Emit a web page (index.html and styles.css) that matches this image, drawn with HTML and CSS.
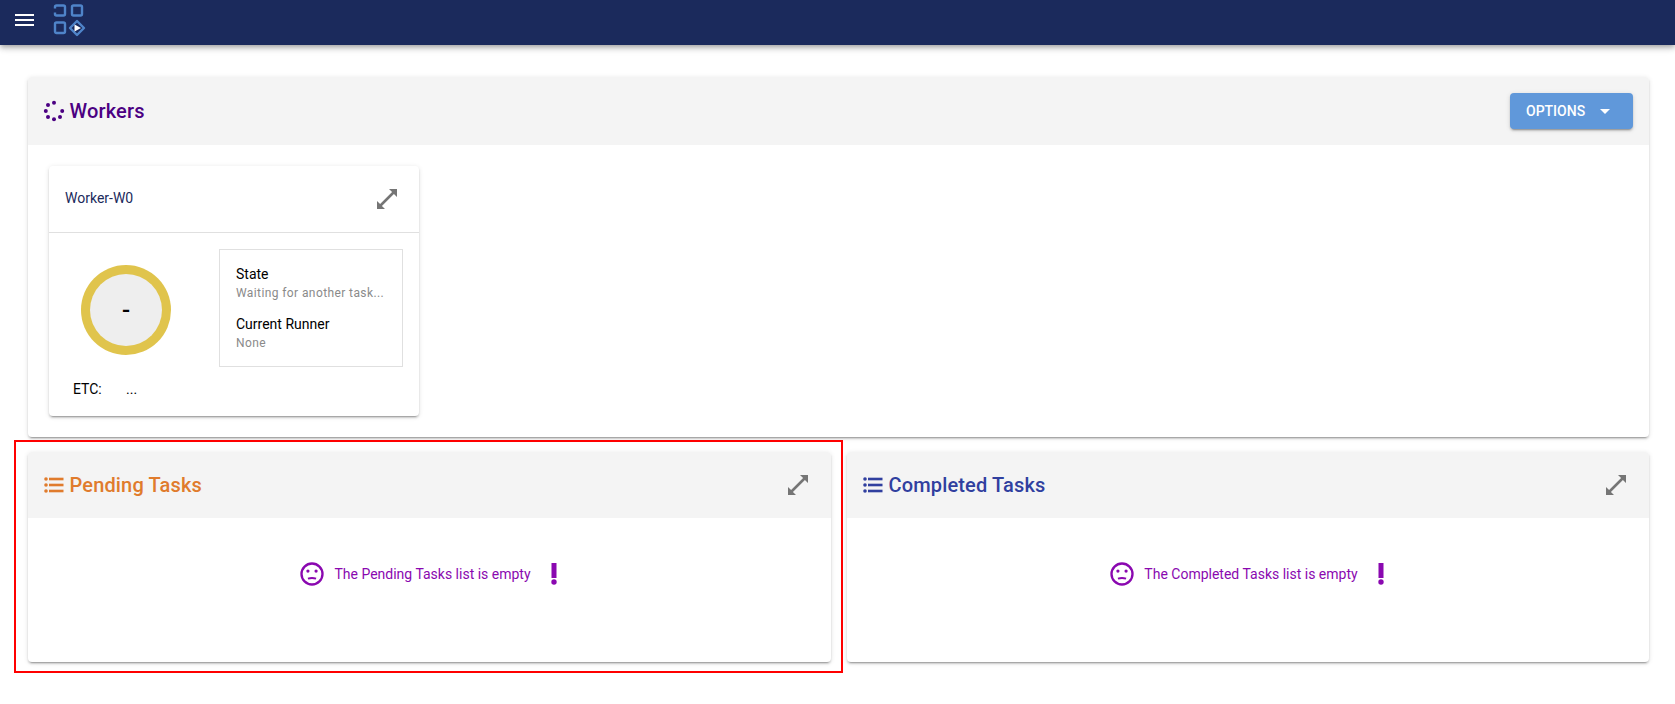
FILE: index.html
```html
<!DOCTYPE html>
<html lang="en">
<head>
<meta charset="utf-8">
<title>Workers</title>
<link rel="stylesheet" href="styles.css">
</head>
<body>
<header class="topbar">
  <button class="menu-btn" aria-label="Menu"><span></span><span></span><span></span></button>
  <svg class="logo" viewBox="0 0 34 34" fill="none" stroke="#4f84c9" stroke-width="2.400">
    <path d="M2 4.500V3Q2 1.500 3.500 1.500H10.500Q12 1.500 12 3V10Q12 11.500 10.500 11.500H3.500Q2 11.500 2 10V8.500"/>
    <rect x="19" y="1.500" width="10" height="10" rx="1.500"/>
    <rect x="2" y="18.500" width="10" height="10.500" rx="1.500"/>
    <path d="M24 17L31 24L24 31L17 24Z" stroke-linejoin="round"/>
    <path d="M21.500 20.500L28 24L21.500 27.500Z" fill="#fff" stroke="none"/>
  </svg>
</header>
<main class="page">
  <section class="panel">
    <div class="panel-head">
      <h2 class="title workers">
        <svg class="ico" viewBox="0 0 24 24" fill="#4b0082"><circle cx="12" cy="3.800" r="2"/><circle cx="20.200" cy="12" r="2"/><circle cx="18" cy="18" r="2"/><circle cx="12" cy="20.200" r="2"/><circle cx="6" cy="18" r="2"/><circle cx="3.800" cy="12" r="2"/><circle cx="6" cy="6" r="2"/></svg>
        Workers
      </h2>
      <button class="options">OPTIONS<svg class="caret" viewBox="0 0 10 5"><path d="M0 0H10L5 5Z" fill="#fff"/></svg></button>
    </div>
    <div class="panel-body">
      <article class="worker">
        <div class="worker-head">
          <span class="worker-name">Worker-W0</span>
          <svg class="expand" viewBox="0 0 24 24"><path d="M2 22V14L5.080 17.080L17.080 5.080L14 2H22V10L18.920 6.920L6.920 18.920L10 22Z"/></svg>
        </div>
        <div class="worker-body">
          <div class="worker-left">
            <div class="donut"><div class="donut-in">-</div></div>
            <div class="etc"><span class="etc-label">ETC:</span><span>...</span></div>
          </div>
          <div class="info">
            <div class="info-label">State</div>
            <div class="info-value">Waiting for another task...</div>
            <div class="info-label second">Current Runner</div>
            <div class="info-value">None</div>
          </div>
        </div>
      </article>
    </div>
  </section>
  <div class="columns">
    <section class="panel tasks highlighted">
      <div class="panel-head small">
        <h2 class="title pending">
          <svg class="ico" viewBox="0 0 24 24" fill="#e07b2c"><rect x="7" y="4.700" width="14.500" height="2.600"/><rect x="7" y="10.700" width="14.500" height="2.600"/><rect x="7" y="16.700" width="14.500" height="2.600"/><circle cx="4" cy="6" r="1.800"/><circle cx="4" cy="12" r="1.800"/><circle cx="4" cy="18" r="1.800"/></svg>
          Pending Tasks
        </h2>
        <svg class="expand" viewBox="0 0 24 24"><path d="M2 22V14L5.080 17.080L17.080 5.080L14 2H22V10L18.920 6.920L6.920 18.920L10 22Z"/></svg>
      </div>
      <div class="empty">
        <svg class="sad" viewBox="0 0 24 24" fill="none" stroke="#8a08b0" stroke-width="2"><circle cx="12" cy="12" r="9"/><circle cx="8.500" cy="9.500" r="1.400" fill="#8a08b0" stroke="none"/><circle cx="15.500" cy="9.500" r="1.400" fill="#8a08b0" stroke="none"/><path d="M8.500 16Q12 14.800 15.500 16" stroke-width="1.600"/></svg>
        <span class="empty-text">The Pending Tasks list is empty</span>
        <svg class="bang" viewBox="0 0 6 22" fill="#8a08b0"><rect x="0.500" y="0" width="5" height="15"/><circle cx="3" cy="19" r="2.700"/></svg>
      </div>
    </section>
    <section class="panel tasks">
      <div class="panel-head small">
        <h2 class="title completed">
          <svg class="ico" viewBox="0 0 24 24" fill="#303f9f"><rect x="7" y="4.700" width="14.500" height="2.600"/><rect x="7" y="10.700" width="14.500" height="2.600"/><rect x="7" y="16.700" width="14.500" height="2.600"/><circle cx="4" cy="6" r="1.800"/><circle cx="4" cy="12" r="1.800"/><circle cx="4" cy="18" r="1.800"/></svg>
          Completed Tasks
        </h2>
        <svg class="expand" viewBox="0 0 24 24"><path d="M2 22V14L5.080 17.080L17.080 5.080L14 2H22V10L18.920 6.920L6.920 18.920L10 22Z"/></svg>
      </div>
      <div class="empty">
        <svg class="sad" viewBox="0 0 24 24" fill="none" stroke="#8a08b0" stroke-width="2"><circle cx="12" cy="12" r="9"/><circle cx="8.500" cy="9.500" r="1.400" fill="#8a08b0" stroke="none"/><circle cx="15.500" cy="9.500" r="1.400" fill="#8a08b0" stroke="none"/><path d="M8.500 16Q12 14.800 15.500 16" stroke-width="1.600"/></svg>
        <span class="empty-text">The Completed Tasks list is empty</span>
        <svg class="bang" viewBox="0 0 6 22" fill="#8a08b0"><rect x="0.500" y="0" width="5" height="15"/><circle cx="3" cy="19" r="2.700"/></svg>
      </div>
    </section>
  </div>
</main>
</body>
</html>
```

FILE: styles.css
```css
* { box-sizing: border-box; }
html, body { margin: 0; padding: 0; height: 100%; overflow: hidden; background: #fff; }
body { font-family: Roboto, "Liberation Sans", sans-serif; color: #000; font-size: 14px; }

.topbar {
  height: 45px;
  background: #1b2a5c;
  display: flex;
  align-items: center;
  padding-left: 15px;
  box-shadow: 0 2px 4px -1px rgba(0,0,0,.2), 0 4px 5px 0 rgba(0,0,0,.14), 0 1px 10px 0 rgba(0,0,0,.12);
  position: relative;
}
.menu-btn {
  width: 19px;
  height: 12px;
  padding: 0;
  border: 0;
  background: none;
  display: flex;
  flex-direction: column;
  justify-content: space-between;
  margin-top: -5px;
}
.menu-btn span { display: block; height: 2px; background: #fff; }
.logo { width: 34px; height: 34px; margin-left: 19px; margin-top: -3px; }

.page { padding: 32px 26px 0 28px; }

.panel {
  background: #fff;
  border-radius: 4px;
  box-shadow: 0 3px 1px -2px rgba(0,0,0,.2), 0 2px 2px 0 rgba(0,0,0,.14), 0 1px 5px 0 rgba(0,0,0,.12);
}
.panel-head {
  height: 68px;
  background: #f4f4f4;
  border-radius: 4px 4px 0 0;
  display: flex;
  align-items: center;
  justify-content: space-between;
  padding: 0 16px 0 13.500px;
}
.panel-head.small { height: 66px; padding-right: 21px; }

.title {
  margin: 0;
  display: flex;
  align-items: center;
  gap: 4px;
  font-size: 20px;
  font-weight: 500;
  line-height: 24px;
  letter-spacing: .15px;
}
.ico { width: 24px; height: 24px; flex: none; }
.workers { color: #4b0082; }
.pending { color: #e07b2c; }
.completed { color: #303f9f; }

.options {
  width: 123px;
  height: 36px;
  border: 0;
  border-radius: 4px;
  background: #6098da;
  color: #fff;
  font: 500 14px Roboto, sans-serif;
  display: flex;
  align-items: center;
  padding: 0 0 0 16px;
  box-shadow: 0 3px 1px -2px rgba(0,0,0,.2), 0 2px 2px 0 rgba(0,0,0,.14), 0 1px 5px 0 rgba(0,0,0,.12);
}
.caret { width: 10px; height: 5px; margin-left: 15px; }

.panel-body { padding: 21px 20px 21px 21px; height: 292px; }
.worker {
  width: 370px;
  height: 250px;
  border-radius: 4px;
  background: #fff;
  box-shadow: 0 3px 1px -2px rgba(0,0,0,.2), 0 2px 2px 0 rgba(0,0,0,.14), 0 1px 5px 0 rgba(0,0,0,.12);
}
.worker-head {
  height: 67px;
  border-bottom: 1px solid #e0e0e0;
  display: flex;
  align-items: center;
  justify-content: space-between;
  padding: 0 20px 0 16px;
}
.worker-name { color: #1b2a5c; font-size: 14px; margin-top: -2px; }
.expand { width: 24px; height: 24px; fill: #757575; flex: none; }

.worker-body { display: flex; padding-top: 16px; }
.worker-left { width: 170px; flex: none; }
.donut {
  width: 90px;
  height: 90px;
  margin: 16px 0 0 32px;
  border-radius: 50%;
  background: #e0c44c;
  padding: 9px;
}
.donut-in {
  width: 100%;
  height: 100%;
  border-radius: 50%;
  background: #eee;
  display: flex;
  align-items: center;
  justify-content: center;
  font-size: 24px;
  font-weight: 500;
}
.etc { display: flex; margin: 24px 0 0 24px; line-height: 20px; }
.etc-label { width: 53px; }

.info {
  width: 184px;
  height: 118px;
  border: 1px solid #e0e0e0;
  padding: 14px 0 0 16px;
}
.info-label { font-size: 14px; line-height: 20px; }
.info-label.second { margin-top: 12px; }
.info-value { font-size: 12px; line-height: 18px; color: #8a8a8a; letter-spacing: .4px; white-space: nowrap; }

.columns {
  display: grid;
  grid-template-columns: 803px 802px;
  gap: 16px;
  margin-top: 15px;
}
.tasks { height: 210px; position: relative; }
.highlighted::after {
  content: "";
  position: absolute;
  left: -14px;
  right: -12px;
  top: -12px;
  bottom: -11px;
  border: 2px solid #f00;
  pointer-events: none;
}
.empty {
  display: flex;
  align-items: center;
  justify-content: center;
  height: 28px;
  margin-top: 42px;
  padding-right: 4px;
  color: #8a08b0;
}
.sad { width: 28px; height: 28px; flex: none; }
.empty-text { font-size: 14px; line-height: 20px; margin: 0 20px 0 8px; }
.bang { width: 6px; height: 22px; flex: none; }
```
